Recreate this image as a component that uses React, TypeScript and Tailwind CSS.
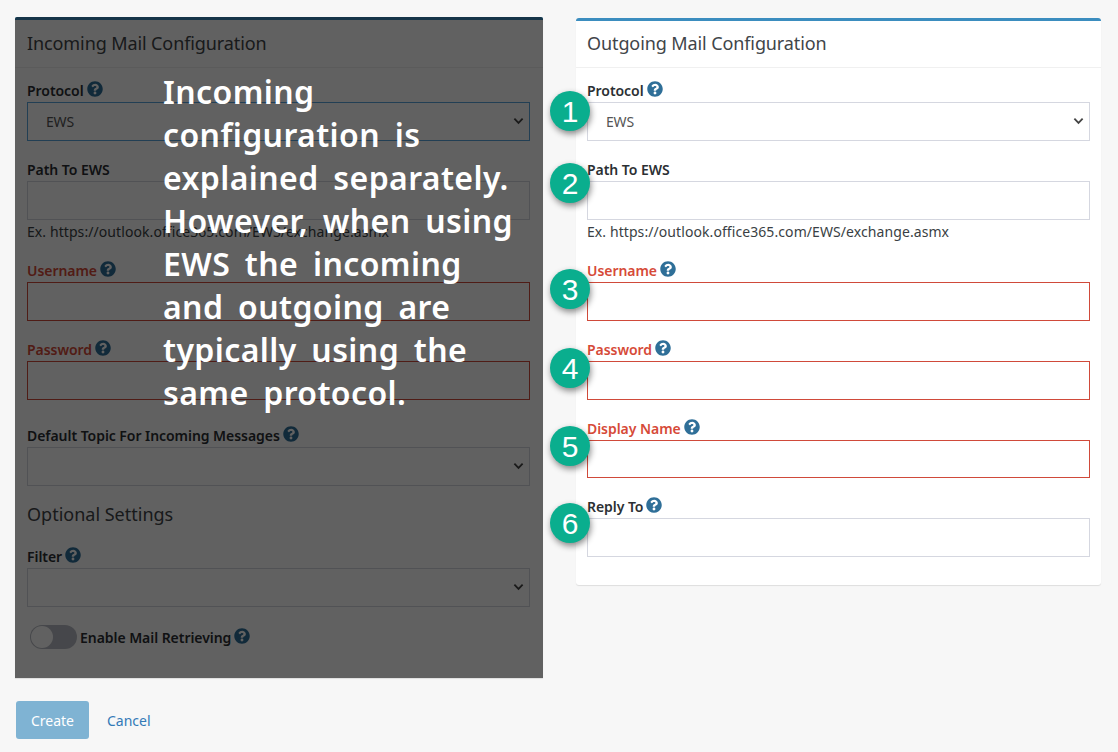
import { FaQuestionCircle } from "react-icons/fa";

const font = { fontFamily: '"Noto Sans", "Open Sans", sans-serif' };

function Help() {
  return <FaQuestionCircle className="inline-block text-[16px] text-[#2f6f98] ml-[3px] align-[-1px]" />;
}

function Label({ text, error, noHelp }: { text: string; error?: boolean; noHelp?: boolean }) {
  return (
    <label className={`block h-[24px] leading-[26px] text-[14px] font-semibold tracking-[-0.05px] whitespace-nowrap ${error ? "text-[#d64a38]" : "text-[#2b2f33]"}`}>
      {text}
      {!noHelp && <Help />}
    </label>
  );
}

function Chevron() {
  return (
    <svg viewBox="0 0 12 8" className="absolute right-[5px] top-[14px] w-[11px] h-[8px] pointer-events-none">
      <path d="M1.5 1.5 6 6l4.5-4.5" fill="none" stroke="#444" strokeWidth="2" />
    </svg>
  );
}

function Input({ error, short }: { error?: boolean; short?: boolean }) {
  return <div className={`border bg-white ${short ? "h-[38px]" : "h-[39px]"} ${error ? "border-[#d04a3a]" : "border-[#d5d7e0]"}`}></div>;
}

function Select({ value, focus }: { value?: string; focus?: boolean }) {
  return (
    <div className={`relative h-[39px] border bg-white ${focus ? "border-[#5ba7dc]" : "border-[#d5d7e0]"}`}>
      <span className="block pl-[18px] leading-[38px] text-[14px] tracking-[-0.2px] text-[#555]">{value}</span>
      <Chevron />
    </div>
  );
}

function Hint() {
  return <p className="h-[22px] mt-[1px] leading-[21px] text-[14px] tracking-[0.08px] text-[#3a3f44] whitespace-nowrap">Ex. https://outlook.office365.com/EWS/exchange.asmx</p>;
}

function Badge({ n, className }: { n: number; className: string }) {
  return (
    <div
      className={`absolute left-[-26px] w-[40px] h-[40px] rounded-full bg-[#0aae8e] text-white flex items-center justify-center text-[30px] shadow-[1px_3px_6px_rgba(0,0,0,0.45)] ${className}`}
      style={{ fontFamily: '"Liberation Sans", sans-serif' }}
    >
      {n}
    </div>
  );
}

export default function App() {
  return (
    <div className="h-[752px] overflow-hidden bg-[#f7f7f7] pt-[17px] pl-[15px]" style={font}>
      <div className="flex items-start gap-[33px]">
        <div className="relative w-[528px] h-[661px] bg-white border-t-[3px] border-[#3b8dbf] rounded-t-[2px] shadow-[0_1px_1px_rgba(0,0,0,0.1)]">
          <div className="h-[48px] px-[12px] border-b border-[#f0f0f0] text-[18px] leading-[46px] tracking-[-0.1px] text-[#3f4549]">Incoming Mail Configuration</div>
          <div className="pl-[12px] pr-[13px] pt-[10px]">
            <Label text="Protocol" />
            <Select value="EWS" focus />
            <div className="h-[16px]"></div>
            <Label text="Path To EWS" noHelp />
            <Input />
            <Hint />
            <div className="h-[15px]"></div>
            <Label text="Username" error />
            <Input error />
            <div className="h-[16px]"></div>
            <Label text="Password" error />
            <Input error />
            <div className="h-[23px]"></div>
            <Label text="Default Topic For Incoming Messages" />
            <Select />
            <div className="h-[58px] pt-[14px] text-[18px] leading-[28px] text-[#3f4549]">Optional Settings</div>
            <Label text="Filter" />
            <Select />
            <div className="flex items-center h-[24px] mt-[18px] pl-[3px]">
              <div className="relative w-[47px] h-[24px] rounded-full bg-[#b9bcc4] shrink-0">
                <div className="absolute left-[1px] top-[1px] w-[22px] h-[22px] rounded-full bg-white"></div>
              </div>
              <span className="ml-[3px] text-[14px] font-semibold tracking-[-0.05px] text-[#2b2f33]">Enable Mail Retrieving<Help /></span>
            </div>
          </div>
          <div className="absolute inset-x-0 top-[-3px] bottom-0 bg-black/[0.62] rounded-t-[2px]">
            <p className="absolute left-[148px] top-[53px] whitespace-nowrap text-[32px] leading-[43px] font-semibold tracking-[0.4px] [word-spacing:6px] text-white">
              Incoming
              <br />
              configuration is
              <br />
              explained separately.
              <br />
              However, when using
              <br />
              EWS the incoming
              <br />
              and outgoing are
              <br />
              typically using the
              <br />
              same protocol.
            </p>
          </div>
        </div>

        <div className="relative w-[525px] h-[567px] mt-[1px] bg-white border-t-[3px] border-[#3b8dbf] rounded-[3px] shadow-[0_1px_1px_rgba(0,0,0,0.1)]">
          <div className="h-[47px] px-[11px] border-b border-[#f0f0f0] text-[18px] leading-[44px] tracking-[-0.1px] text-[#3f4549]">Outgoing Mail Configuration</div>
          <div className="px-[11px] pt-[10px]">
            <Label text="Protocol" />
            <Select value="EWS" />
            <div className="h-[16px]"></div>
            <Label text="Path To EWS" noHelp />
            <Input />
            <Hint />
            <div className="h-[15px]"></div>
            <Label text="Username" error />
            <Input error />
            <div className="h-[16px]"></div>
            <Label text="Password" error />
            <Input error />
            <div className="h-[16px]"></div>
            <Label text="Display Name" error />
            <Input error short />
            <div className="h-[16px]"></div>
            <Label text="Reply To" />
            <Input />
          </div>
          <Badge n={1} className="top-[70px]" />
          <Badge n={2} className="top-[142px]" />
          <Badge n={3} className="top-[248px]" />
          <Badge n={4} className="top-[327px]" />
          <Badge n={5} className="top-[405px]" />
          <Badge n={6} className="top-[482px]" />
        </div>
      </div>

      <div className="flex items-center mt-[23px] pl-[1px]">
        <button className="w-[73px] h-[38px] rounded-[3px] bg-[#7fb3d3] text-white text-[14px]">Create</button>
        <a className="ml-[18px] text-[14px] text-[#337ab7]">Cancel</a>
      </div>
    </div>
  );
}
